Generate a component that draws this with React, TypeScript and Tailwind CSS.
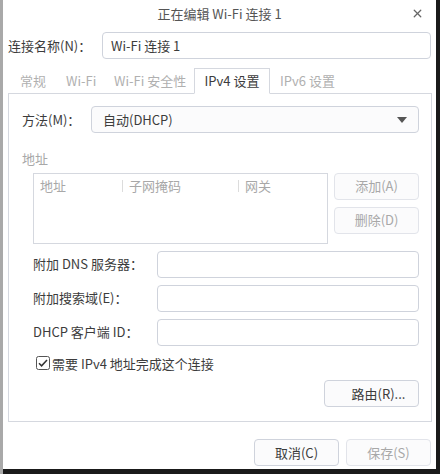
import { X } from "lucide-react";

const font = { fontFamily: '"Noto Sans CJK SC", "Noto Sans", sans-serif' };

function Field({ label }: { label: string }) {
  return (
    <div className="flex h-[27px] items-center">
      <span className="w-[124px] shrink-0 text-[#3c3c3c]">{label}</span>
      <div className="h-full flex-1 rounded-[4px] border border-[#cfd3dc] bg-white" />
    </div>
  );
}

function Btn({ children, disabled, className = "" }: { children: React.ReactNode; disabled?: boolean; className?: string }) {
  return (
    <button
      type="button"
      className={`flex h-[27px] items-center justify-center rounded-[4px] border bg-[#fbfbfc] ${
        disabled ? "border-[#e2e4ea] text-[#a8a8a8]" : "border-[#cfd3dc] text-[#3c3c3c]"
      } ${className}`}
    >
      {children}
    </button>
  );
}

export default function App() {
  return (
    <div className="flex h-[474px] w-[440px] overflow-hidden bg-[#1a1a1a] text-[13px]" style={font}>
      <div className="w-[3px] shrink-0 bg-[#a9a9a9]" />
      <div className="flex h-[469px] w-[433px] flex-col bg-white">
        {/* title bar */}
        <div className="relative flex h-[27px] shrink-0 items-center justify-center text-[#555]">
          正在编辑 Wi-Fi 连接 1
          <X className="absolute right-[12px] top-[7px] h-[13px] w-[13px] text-[#666]" strokeWidth={2.4} />
        </div>

        <div className="mt-[5px] flex h-[27px] items-center pl-[5px] pr-[5px]">
          <span className="w-[94px] shrink-0 text-[#3c3c3c]">连接名称(N)：</span>
          <div className="flex h-full flex-1 items-center rounded-[4px] border border-[#cfd3dc] px-[8px] text-[#3c3c3c]">
            Wi-Fi 连接 1
          </div>
        </div>

        {/* tabs */}
        <div className="mt-[9px] flex h-[25px] items-stretch pl-[5px] text-[#b0b0b0]">
          <span className="flex w-[58px] items-center pl-[12px]">常规</span>
          <span className="flex w-[48px] items-center">Wi-Fi</span>
          <span className="flex w-[80px] items-center">Wi-Fi 安全性</span>
          <span className="relative z-10 -mb-px flex w-[76px] items-center justify-center border border-[#d5d8df] border-b-white bg-white text-[#3c3c3c]">
            IPv4 设置
          </span>
          <span className="flex items-center pl-[10px]">IPv6 设置</span>
        </div>

        <div className="ml-[5px] mr-[4px] flex h-[329px] flex-col border border-[#d5d8df] px-[12px]">
          <div className="mt-[12px] flex h-[27px] items-center">
            <span className="w-[70px] shrink-0 pl-[1px] text-[#3c3c3c]">方法(M)：</span>
            <div className="flex h-full flex-1 items-center justify-between rounded-[4px] border border-[#cfd3dc] bg-[#fbfbfc] pl-[11px] pr-[11px] text-[#3c3c3c]">
              自动(DHCP)
              <svg width="10" height="6" viewBox="0 0 10 6">
                <path d="M0 0h10L5 6z" fill="#555" />
              </svg>
            </div>
          </div>

          <div className="mt-[16px] pl-[1px] text-[#a8a8a8]">地址</div>

          <div className="mt-[4px] flex gap-[6px] pl-[12px]">
            <div className="h-[71px] w-[295px] border border-[#d5d8df]">
              <div className="flex h-[24px] items-center text-[#a8a8a8]">
                <span className="w-[88px] pl-[6px]">地址</span>
                <span className="w-[116px] border-l border-[#dcdcdc] pl-[6px] leading-[12px]">子网掩码</span>
                <span className="border-l border-[#dcdcdc] pl-[6px] leading-[12px]">网关</span>
              </div>
            </div>
            <div className="flex flex-1 flex-col gap-[7px]">
              <Btn disabled>添加(A)</Btn>
              <Btn disabled>删除(D)</Btn>
            </div>
          </div>

          <div className="mt-[7px] flex flex-col gap-[7px] pl-[12px]">
            <Field label="附加 DNS 服务器：" />
            <Field label="附加搜索域(E)：" />
            <Field label="DHCP 客户端 ID：" />
          </div>

          <div className="mt-[8px] flex items-center gap-[2px] pl-[15px] text-[#3c3c3c]">
            <svg width="14" height="14" viewBox="0 0 14 14">
              <rect x="0.5" y="0.5" width="13" height="13" rx="2" fill="white" stroke="#555" />
              <path d="M3 7.2l2.6 2.6L11 4" fill="none" stroke="#333" strokeWidth="1.5" />
            </svg>
            需要 IPv4 地址完成这个连接
          </div>

          <div className="mt-[7px] flex justify-end">
            <Btn className="w-[95px] pl-[14px]">路由(R)...</Btn>
          </div>
        </div>

        <div className="mt-[17px] flex justify-end gap-[7px] pr-[5px]">
          <Btn className="w-[85px]">取消(C)</Btn>
          <Btn disabled className="w-[85px]">保存(S)</Btn>
        </div>
      </div>
    </div>
  );
}
